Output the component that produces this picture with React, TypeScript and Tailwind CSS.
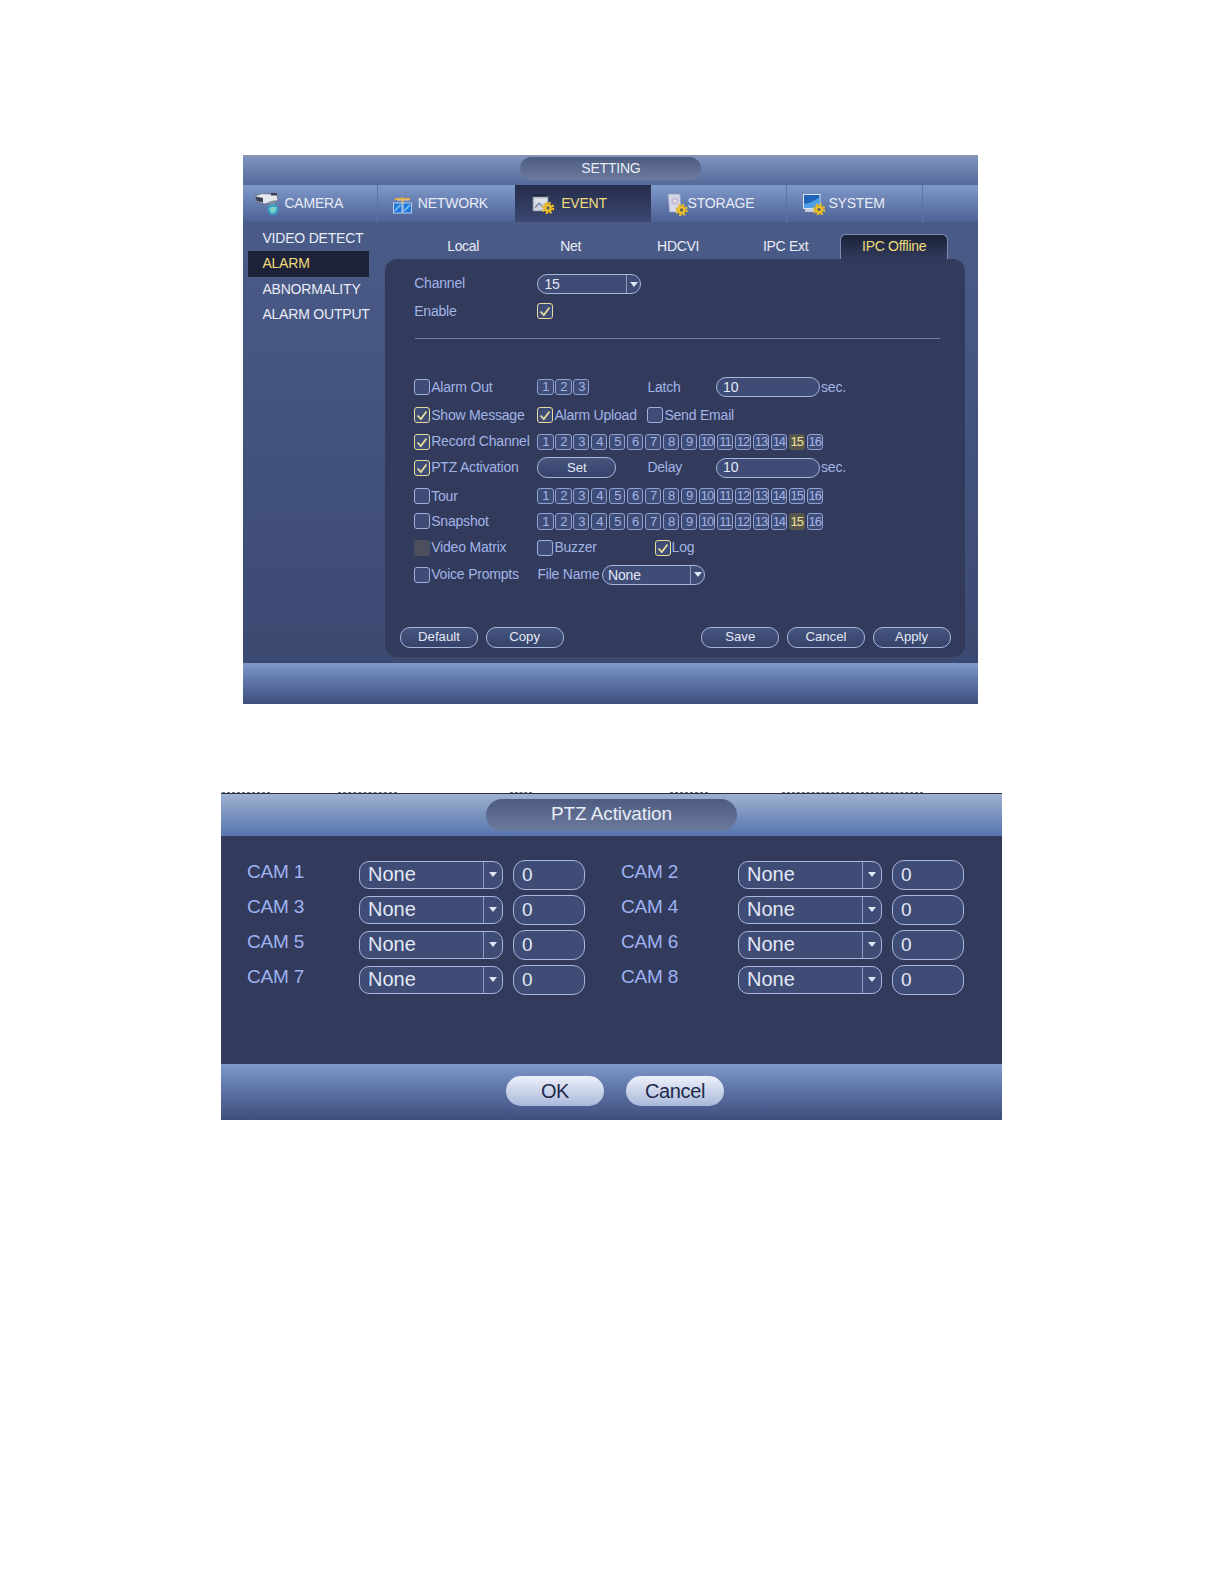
import React from 'react';

const font = 'font-["Liberation_Sans",Arial,sans-serif]';

function Pill({ label, className = '' }: { label: string; className?: string }) {
  return (
    <div className={`flex items-center justify-center h-[21.2px] w-[77.8px] rounded-[10px] border border-[#a9b7dc] bg-gradient-to-b from-[#46557f] to-[#36436b] text-[13.2px] text-[#e3e8f5] ${className}`}>
      {label}
    </div>
  );
}

function Check({ on, off }: { on?: boolean; off?: boolean }) {
  if (off) return <span className="block w-4 h-4 rounded-[3px] bg-[#4b4f5e] shrink-0" />;
  return (
    <span className={`flex items-center justify-center w-4 h-4 rounded-[3px] border shrink-0 ${on ? 'border-[#e6dc9c] bg-[#3e4c76]' : 'border-[#9fb0dc] bg-[#3e4c76]'}`}>
      {on && (
        <svg viewBox="0 0 14 14" className="w-3.5 h-3.5">
          <path d="M2.5 7.5 L5.8 11 L11.5 3.5" fill="none" stroke="#e6dc9c" strokeWidth="1.8" />
        </svg>
      )}
    </span>
  );
}

function CheckLabel({ label, on, off }: { label: string; on?: boolean; off?: boolean }) {
  return (
    <div className="flex items-center gap-px shrink-0">
      <Check on={on} off={off} />
      <span className="text-[14px] text-[#a3b4e6] tracking-[-0.2px] whitespace-nowrap">{label}</span>
    </div>
  );
}

function Nums({ count, hot }: { count: number; hot?: number }) {
  return (
    <div className="flex gap-[1.77px]">
      {Array.from({ length: count }, (_, i) => i + 1).map(n => (
        <span
          key={n}
          className={`flex items-center justify-center w-[16.2px] h-[16.2px] rounded-[3px] text-[13px] tracking-[-1px] ${n === hot ? 'bg-[#58574f] text-[#f0e39a]' : 'border border-[#8fa2d4] bg-[#3e4c76] text-[#a3b4e6]'}`}
        >
          {n}
        </span>
      ))}
    </div>
  );
}

function Select({ value, width, height, arrow, text, pad }: { value: string; width: string; height: string; arrow: string; text: string; pad: string }) {
  return (
    <div className={`flex items-stretch rounded-[10px] border border-[#a9b7dc] bg-[#3e4c76] text-[#e3e8f5] shrink-0 ${width} ${height} ${text}`}>
      <span className={`flex-1 flex items-center leading-none ${pad}`}>{value}</span>
      <span className={`flex items-center justify-center border-l border-[#8c9bc4] ${arrow}`}>
        <svg viewBox="0 0 8 5" className="w-2 h-[5px]"><path d="M0 0 H8 L4 5 Z" fill="#dfe5f4" /></svg>
      </span>
    </div>
  );
}

function Input({ value, className }: { value: string; className: string }) {
  return (
    <div className={`flex items-center rounded-[10px] border border-[#a9b7dc] bg-[#3e4c76] text-[#e3e8f5] shrink-0 ${className}`}>
      {value}
    </div>
  );
}

function Row({ h, children }: { h: string; children: React.ReactNode }) {
  return <div className={`flex items-center pl-[29.3px] ${h}`}>{children}</div>;
}

function Gear({ cx, cy }: { cx: number; cy: number }) {
  return (
    <g>
      <circle cx={cx} cy={cy} r="5" fill="none" stroke="#f2c62e" strokeWidth="2.4" strokeDasharray="2 1.93" />
      <circle cx={cx} cy={cy} r="4.2" fill="#f2c62e" stroke="#b98f14" strokeWidth="0.6" />
      <circle cx={cx} cy={cy} r="1.8" fill="#6b6a55" />
    </g>
  );
}

function CameraIcon() {
  return (
    <svg viewBox="0 0 30 26" className="w-[30px] h-[26px]">
      <path d="M1 6 L8 3.5 L23 4.5 L24 10.5 L11 14 L2 11.5 Z" fill="#e4e7ee" stroke="#5a5f72" strokeWidth="0.7" />
      <path d="M1.5 6.5 L9 8 L9 12.5 L2.5 11 Z" fill="#3a3f52" />
      <path d="M17 3 h6 v2.5 h-6 Z" fill="#3a3f52" />
      <path d="M14 12 L17 16 L21 14 L21 10 Z" fill="#8a90a3" />
      <circle cx="19" cy="19.5" r="5.5" fill="#35a0c4" />
      <path d="M15 18.5 q3 -3 8 -1 q-1 5 -5.5 6 Z" fill="#7fd0c8" />
    </svg>
  );
}

function NetworkIcon() {
  return (
    <svg viewBox="0 0 22 24" className="w-[22px] h-[24px]">
      <path d="M3 8 H18 M10.5 6 V12" stroke="#e2a93c" strokeWidth="2" />
      <path d="M5 9 H17" stroke="#d8d2b8" strokeWidth="1" />
      <rect x="1.5" y="12" width="8.5" height="10" fill="#1f78dc" stroke="#d4e2f5" strokeWidth="0.8" />
      <rect x="11" y="12" width="8.5" height="10" fill="#1f78dc" stroke="#d4e2f5" strokeWidth="0.8" />
      <path d="M2.5 20 L8.5 14 M12 20 L18 14" stroke="#7fc0f4" strokeWidth="1.6" />
    </svg>
  );
}

function EventIcon() {
  return (
    <svg viewBox="0 0 24 22" className="w-[24px] h-[22px]">
      <rect x="2" y="2" width="13" height="4" fill="#23283c" />
      <rect x="2" y="5" width="15" height="14" fill="#cfd4de" stroke="#7b8296" strokeWidth="0.7" />
      <path d="M4 8 H15 M4 10 H15" stroke="#f0f2f6" strokeWidth="1" />
      <path d="M4 16 L8 11 L12 15" fill="none" stroke="#7f8aa6" strokeWidth="1.3" />
      <Gear cx={17} cy={16} />
    </svg>
  );
}

function StorageIcon() {
  return (
    <svg viewBox="0 0 22 26" className="w-[22px] h-[26px]">
      <path d="M2 4 H14 L15.5 22 H3.5 Z" fill="#d3d9e8" stroke="#8f9ab3" strokeWidth="0.7" />
      <circle cx="9" cy="11" r="4" fill="#c9bfd6" />
      <circle cx="9" cy="11" r="1.2" fill="#eee" />
      <Gear cx={15.5} cy={20} />
    </svg>
  );
}

function SystemIcon() {
  return (
    <svg viewBox="0 0 23 23" className="w-[23px] h-[23px]">
      <rect x="1.5" y="2.5" width="16.5" height="14" fill="#1f63b8" stroke="#dbe4f2" />
      <path d="M2 12 Q10 11 17.5 5 V16 H2 Z" fill="#4ea1e6" />
      <path d="M3 17 H14 V20 H3 Z" fill="#c6cedd" />
      <Gear cx={17} cy={17.5} />
    </svg>
  );
}

function Tab({ label, icon, width, gap, active }: { label: string; icon: React.ReactNode; width: string; gap: string; active?: boolean }) {
  return (
    <div className={`flex items-center h-full text-[14px] tracking-[-0.2px] shrink-0 ${width} ${gap} ${active ? 'bg-gradient-to-b from-[#262d4d] to-[#3c4870] text-[#eedd7a]' : 'text-[#e8ecf6]'}`}>
      {icon}
      <span>{label}</span>
    </div>
  );
}

function SubTab({ label, active }: { label: string; active?: boolean }) {
  return (
    <div className={`flex items-center justify-center w-[107.5px] h-full text-[14px] tracking-[-0.3px] ${active ? 'rounded-t-[6px] border-t border-x border-[#7d8cb5] bg-gradient-to-b from-[#1b2138] to-[#323b5e] text-[#eedd7a]' : 'text-[#e8ecf6]'}`}>
      {label}
    </div>
  );
}

function SettingWindow() {
  return (
    <div className="w-[735px] h-[549px] flex flex-col border-t border-[#8e96a8] bg-[#465680]">
      <div className="h-[29px] flex justify-center pt-px bg-gradient-to-b from-[#7f95c0] to-[#55699a]">
        <div className="flex items-center justify-center w-[181px] h-[23px] rounded-full bg-gradient-to-b from-[#4d5c80] to-[#6c7a9e] text-[14px] tracking-[-0.2px] text-[#e8ecf6]">
          SETTING
        </div>
      </div>
      <div className="h-[37px] flex bg-gradient-to-b from-[#7f9aca] to-[#4d6194]">
        <Tab label="CAMERA" icon={<CameraIcon />} width="w-[134.4px] pl-[11px] border-r border-[#5f74a6]" gap="gap-0" />
        <Tab label="NETWORK" icon={<NetworkIcon />} width="w-[137.4px] pl-[14px]" gap="gap-[4px]" />
        <Tab label="EVENT" icon={<EventIcon />} width="w-[135.4px] pl-[16px]" gap="gap-[6px]" active />
        <Tab label="STORAGE" icon={<StorageIcon />} width="w-[136.4px] pl-[15px] border-r border-[#5f74a6]" gap="gap-0" />
        <Tab label="SYSTEM" icon={<SystemIcon />} width="w-[136.4px] pl-[15px] border-r border-[#5f74a6]" gap="gap-[3.5px]" />
      </div>
      <div className="h-[441px] flex bg-gradient-to-b from-[#4b5b88] to-[#3c4a72]">
        <div className="w-[126.5px] ml-[5px] pt-[4.5px] text-[14px] tracking-[-0.2px] text-[#e8ecf6] shrink-0">
          <div className="h-[25.25px] flex items-center pl-[14px]">VIDEO DETECT</div>
          <div className="h-[25.25px] w-[121px] flex items-center pl-[14px] bg-[#1e2238] text-[#eedd7a]">ALARM</div>
          <div className="h-[25.25px] flex items-center pl-[14px]">ABNORMALITY</div>
          <div className="h-[25.25px] flex items-center pl-[14px] whitespace-nowrap">ALARM OUTPUT</div>
        </div>
        <div className="ml-[10px] w-[580px] flex flex-col">
          <div className="h-[25.4px] mt-[12px] flex pl-[24.5px]">
            <SubTab label="Local" />
            <SubTab label="Net" />
            <SubTab label="HDCVI" />
            <SubTab label="IPC Ext" />
            <div className="ml-px"><div className="h-[25.4px]"><SubTab label="IPC Offline" active /></div></div>
          </div>
          <div className="w-[580px] h-[398px] flex flex-col rounded-[12px] bg-[#323b5c] pt-[11.1px] text-[14px] text-[#a3b4e6]">
            <Row h="h-[28.3px]">
              <span className="w-[123.2px] tracking-[-0.2px] -mt-[2px]">Channel</span>
              <Select value="15" width="w-[104px]" height="h-[20.2px]" arrow="w-[14px]" text="text-[14px] tracking-[-0.2px]" pad="pl-[6px]" />
            </Row>
            <Row h="h-[26.3px]">
              <span className="w-[123.2px] tracking-[-0.2px]">Enable</span>
              <Check on />
            </Row>
            <div className="ml-[30.3px] mr-[25.2px] mt-[13.1px] h-px bg-[#6f7ea8]" />
            <div className="h-[34.3px]" />
            <Row h="h-[28.3px]">
              <div className="w-[123.2px]"><CheckLabel label="Alarm Out" /></div>
              <div className="w-[110px]"><Nums count={3} /></div>
              <span className="w-[68.7px] tracking-[-0.2px]">Latch</span>
              <Input value="10" className="w-[104px] h-[20.2px] pl-[6px] text-[14px] tracking-[-0.2px]" />
              <span className="ml-[1px] tracking-[-0.2px]">sec.</span>
            </Row>
            <Row h="h-[28.3px]">
              <div className="w-[123.2px]"><CheckLabel label="Show Message" on /></div>
              <div className="w-[110px]"><CheckLabel label="Alarm Upload" on /></div>
              <CheckLabel label="Send Email" />
            </Row>
            <Row h="h-[24.2px]">
              <div className="w-[123.2px]"><CheckLabel label="Record Channel" on /></div>
              <Nums count={16} hot={15} />
            </Row>
            <Row h="h-[28.3px]">
              <div className="w-[123.2px]"><CheckLabel label="PTZ Activation" on /></div>
              <div className="w-[110px]">
                <Pill label="Set" className="w-[78.8px] h-[20.2px]" />
              </div>
              <span className="w-[68.7px] tracking-[-0.2px]">Delay</span>
              <Input value="10" className="w-[104px] h-[20.2px] pl-[6px] text-[14px] tracking-[-0.2px]" />
              <span className="ml-[1px] tracking-[-0.2px]">sec.</span>
            </Row>
            <Row h="h-[28.3px]">
              <div className="w-[123.2px]"><CheckLabel label="Tour" /></div>
              <Nums count={16} />
            </Row>
            <Row h="h-[22.2px]">
              <div className="w-[123.2px]"><CheckLabel label="Snapshot" /></div>
              <Nums count={16} hot={15} />
            </Row>
            <Row h="h-[30.3px]">
              <div className="w-[123.2px]"><CheckLabel label="Video Matrix" off /></div>
              <div className="w-[117.2px]"><CheckLabel label="Buzzer" /></div>
              <CheckLabel label="Log" on />
            </Row>
            <Row h="h-[24.2px]">
              <div className="w-[123.2px]"><CheckLabel label="Voice Prompts" /></div>
              <span className="w-[64.7px] tracking-[-0.2px] whitespace-nowrap">File Name</span>
              <Select value="None" width="w-[103px]" height="h-[20.2px]" arrow="w-[14px]" text="text-[14px] tracking-[-0.2px]" pad="pl-[5px]" />
            </Row>
            <div className="mt-auto mb-[9.1px] flex pl-[15.2px] pr-[14.4px] gap-[7.9px]">
              <Pill label="Default" />
              <Pill label="Copy" />
              <div className="flex-1" />
              <Pill label="Save" />
              <Pill label="Cancel" />
              <Pill label="Apply" />
            </div>
          </div>
        </div>
      </div>
      <div className="h-[41px] bg-gradient-to-b from-[#7f9aca] via-[#5b70a4] to-[#3f4f7c]" />
    </div>
  );
}

function CamCell({ label, labelW }: { label: string; labelW: string }) {
  return (
    <div className="flex items-center h-[30.3px]">
      <span className={`text-[19px] text-[#9fb2f2] -mt-[6px] tracking-[-0.2px] ${labelW}`}>{label}</span>
      <Select value="None" width="w-[143.5px]" height="h-[27.5px]" arrow="w-[19px]" text="text-[20px]" pad="pl-[8px] pb-[2px]" />
      <Input value="0" className="ml-[10.5px] w-[71.7px] h-[30.3px] pl-[8px] text-[19px] rounded-[12px]" />
    </div>
  );
}

function PtzWindow() {
  const rows = [[1, 2], [3, 4], [5, 6], [7, 8]];
  return (
    <div className="w-[781px] h-[327px] flex flex-col bg-[#323b5c]">
      <div className="h-[42.5px] flex items-center justify-center border-t border-[#2c2f3a] bg-gradient-to-b from-[#9db0cf] to-[#5775ad]">
        <div className="flex items-center justify-center w-[251.5px] h-[32.3px] rounded-full bg-gradient-to-b from-[#4d5c80] to-[#6c7a9e] text-[19px] tracking-[-0.1px] text-[#e8ecf6]">
          PTZ Activation
        </div>
      </div>
      <div className="h-[228px] pt-[24.2px] pl-[26px] flex flex-col gap-[4.75px]">
        {rows.map(([a, b]) => (
          <div key={a} className="flex">
            <div className="w-[374px]"><CamCell label={`CAM ${a}`} labelW="w-[112px]" /></div>
            <CamCell label={`CAM ${b}`} labelW="w-[117px]" />
          </div>
        ))}
      </div>
      <div className="h-[56.5px] flex items-center justify-center gap-[22px] pl-[7px] pb-px bg-gradient-to-b from-[#7f9aca] via-[#5b70a4] to-[#3f4f7c]">
        <div className="flex items-center justify-center w-[98px] h-[30.3px] rounded-[15px] bg-gradient-to-b from-[#eef1f9] to-[#a9b8db] text-[20px] tracking-[-0.4px] text-[#1f2a4a]">OK</div>
        <div className="flex items-center justify-center w-[98px] h-[30.3px] rounded-[15px] bg-gradient-to-b from-[#eef1f9] to-[#a9b8db] text-[20px] tracking-[-0.4px] text-[#1f2a4a]">Cancel</div>
      </div>
    </div>
  );
}

export default function App() {
  return (
    <div className={`w-[1224px] h-[1584px] bg-white pt-[154.5px] ${font}`}>
      <div className="ml-[243.4px]">
        <SettingWindow />
      </div>
      <div className="ml-[221px] mt-[87.5px]">
        {/* bits of the scan above the dialog */}
        <div className="h-[2px] flex items-end pl-px">
          <span className="w-[48px] border-t border-dashed border-[#6a6f82]" />
          <span className="ml-[68px] w-[59px] border-t border-dashed border-[#6a6f82]" />
          <span className="ml-[113px] w-[22px] border-t border-dashed border-[#6a6f82]" />
          <span className="ml-[138px] w-[38px] border-t border-dashed border-[#6a6f82]" />
          <span className="ml-[74px] w-[141px] border-t border-dashed border-[#6a6f82]" />
        </div>
        <PtzWindow />
      </div>
    </div>
  );
}
